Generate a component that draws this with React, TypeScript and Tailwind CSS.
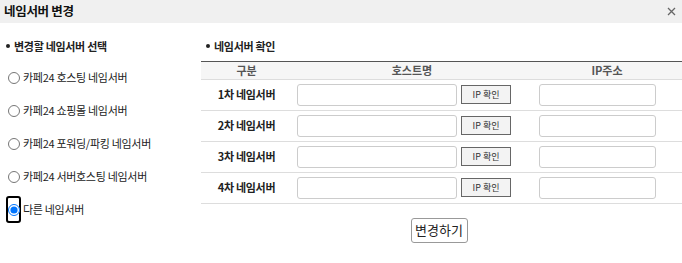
const font = { fontFamily: '"Noto Sans CJK KR", "Noto Sans", sans-serif' };

const options = ['카페24 호스팅 네임서버', '카페24 쇼핑몰 네임서버', '카페24 포워딩/파킹 네임서버', '카페24 서버호스팅 네임서버', '다른 네임서버'];
const rows = ['1차 네임서버', '2차 네임서버', '3차 네임서버', '4차 네임서버'];

function SectionTitle({ children }: { children: string }) {
  return (
    <div className="flex h-4 items-center gap-[4px] text-[11px] font-bold tracking-[-0.3px] text-[#222]">
      <span className="inline-block size-[4px] rounded-full bg-[#222]" />
      {children}
    </div>
  );
}

export default function App() {
  return (
    <div className="h-[263px] w-[682px] overflow-hidden bg-white" style={font}>
      {/* Header */}
      <div className="flex h-[23px] items-center justify-between bg-[#f0f0f0] pl-[4px] pr-[4px]">
        <span className="text-[12.5px] font-bold tracking-[-0.3px] text-[#111]">네임서버 변경</span>
        <svg width="9" height="9" viewBox="0 0 9 9" className="mr-[2px]">
          <path d="M1 1L8 8M8 1L1 8" stroke="#666" strokeWidth="1.3" />
        </svg>
      </div>

      <div className="flex">
        {/* Left: select */}
        <div className="w-[201px] pl-[6px] pt-[15px]">
          <SectionTitle>변경할 네임서버 선택</SectionTitle>
          <div className="mt-[7px] flex flex-col">
            {options.map((o, i) => {
              const last = i === options.length - 1;
              return (
                <label key={o} className="flex h-[33px] items-center text-[11px] tracking-[-0.3px] text-[#222]">
                  {last ? (
                    <span className="flex h-[27px] w-[15px] items-center justify-center rounded-[3px] border-2 border-black">
                      <input type="radio" name="ns" defaultChecked className="m-0 size-[12px]" />
                    </span>
                  ) : (
                    <span className="flex w-[15px] items-center justify-center">
                      <input type="radio" name="ns" className="m-0 size-[12px]" />
                    </span>
                  )}
                  <span className="ml-[2px]">{o}</span>
                </label>
              );
            })}
          </div>
        </div>

        {/* Right: confirm */}
        <div className="w-[481px] pt-[15px]">
          <div className="pl-[5px]">
            <SectionTitle>네임서버 확인</SectionTitle>
          </div>
          <table className="mt-[7px] w-full border-collapse border-t border-[#555]">
            <thead>
              <tr className="h-[16px] border-b border-[#ddd] bg-[#f6f6f6] text-[11px] font-semibold text-[#555]">
                <th className="w-[91px] p-0 font-semibold">구분</th>
                <th className="w-[240px] p-0 font-semibold">호스트명</th>
                <th className="p-0 font-semibold">IP주소</th>
              </tr>
            </thead>
            <tbody>
              {rows.map((r) => (
                <tr key={r} className="h-[31px] border-b border-[#ddd]">
                  <td className="p-0 text-center text-[11px] font-bold tracking-[-0.3px] text-[#222]">{r}</td>
                  <td className="p-0 pl-[5px]">
                    <div className="flex items-center gap-[4px]">
                      <input className="h-[22px] w-[160px] rounded-[3px] border border-[#ccc] bg-white" />
                      <button className="h-[19px] w-[50px] border border-[#666] bg-[#f3f3f3] text-[9px] text-[#333]">
                        IP 확인
                      </button>
                    </div>
                  </td>
                  <td className="p-0 pl-[7px]">
                    <input className="h-[22px] w-[117px] rounded-[3px] border border-[#ccc] bg-white" />
                  </td>
                </tr>
              ))}
            </tbody>
          </table>
          <div className="mt-[14px] flex justify-center pr-[5px]">
            <button className="h-[25px] w-[57px] rounded-[3px] border border-[#999] bg-white text-[13px] text-[#222]">
              변경하기
            </button>
          </div>
        </div>
      </div>
    </div>
  );
}
